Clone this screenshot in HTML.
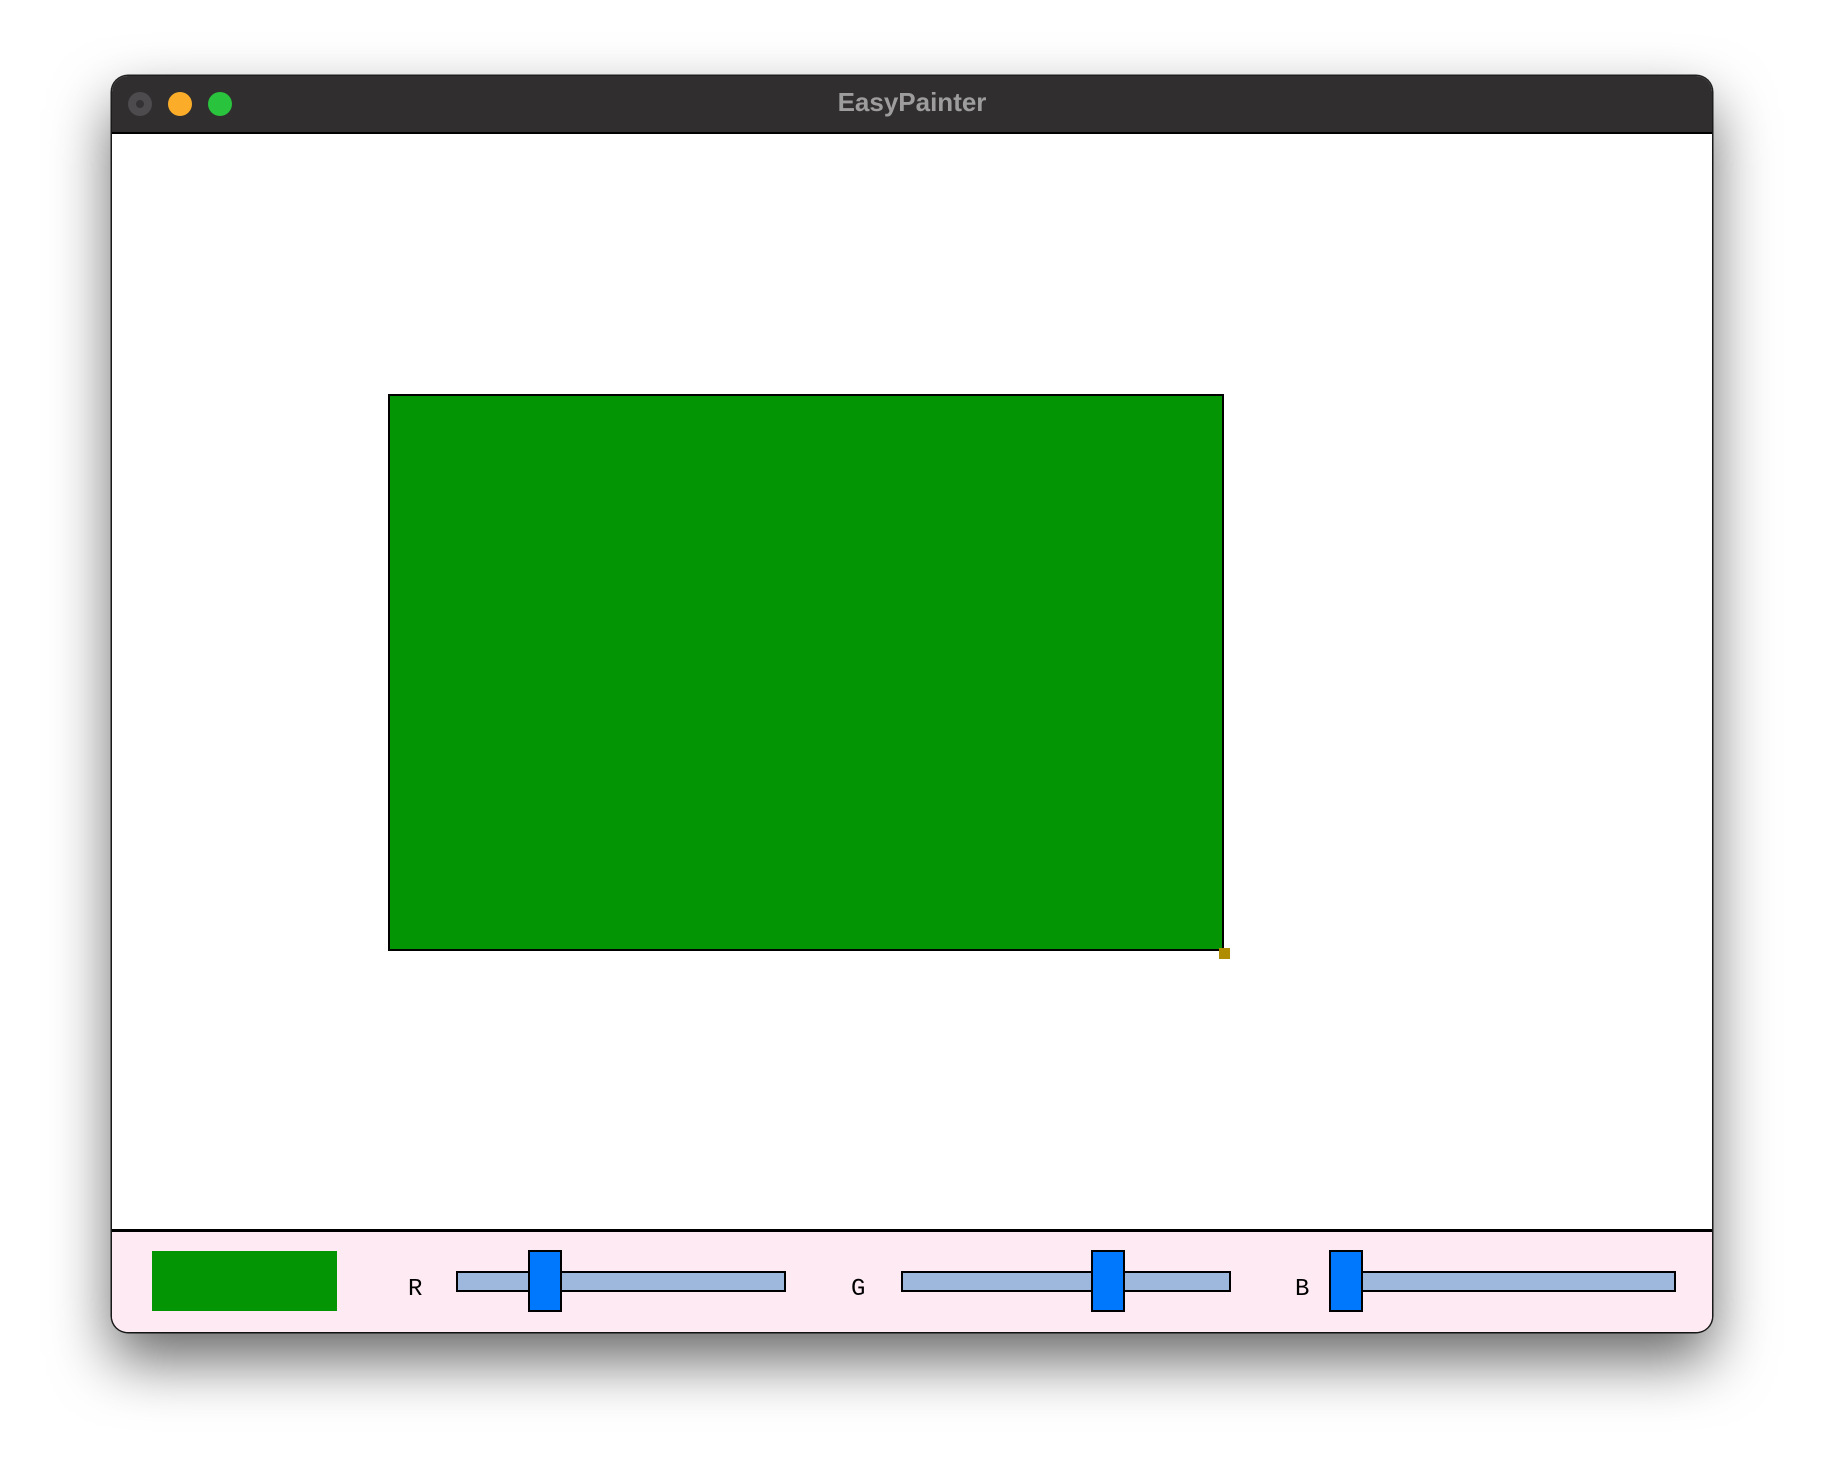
<!DOCTYPE html>
<html><head><style>
html,body{margin:0;padding:0;width:1824px;height:1480px;background:#fff;overflow:hidden;position:relative;font-family:"Liberation Sans",sans-serif}
.win{position:absolute;left:112px;top:76px;width:1600px;height:1256px;border-radius:16px;background:#fff;box-shadow:0 28px 60px rgba(0,0,0,0.6),0 0 0 1.5px #222;overflow:hidden}
.tb{position:absolute;left:0;top:0;width:100%;height:56px;background:#302e2f;border-bottom:2px solid #000}
.dot{position:absolute;top:16px;width:24px;height:24px;border-radius:50%}
.title{position:absolute;left:0;right:0;top:11px;text-align:center;color:#9e9d9e;font-weight:bold;font-size:26px}
.a{position:absolute;box-sizing:border-box}
.lbl{position:absolute;font-family:"Liberation Mono",monospace;font-size:24px;color:#000}
</style></head><body>
<div class="win">
 <div class="tb">
  <div class="dot" style="left:16px;background:#4d4b4d"><div style="position:absolute;left:8px;top:8px;width:8px;height:8px;border-radius:50%;background:#343234"></div></div>
  <div class="dot" style="left:56px;background:#fbad29"></div>
  <div class="dot" style="left:96px;background:#29c33d"></div>
  <div class="title">EasyPainter</div>
 </div>
 <div class="a" style="left:276px;top:318px;width:836px;height:557px;background:#039503;border:2px solid #000"></div>
 <div class="a" style="left:1107px;top:872px;width:11px;height:11px;background:#b08c00"></div>
 <div class="a" style="left:0;top:1153px;width:1600px;height:103px;background:#feeaf2;border-top:3px solid #000"></div>
 <div class="a" style="left:40px;top:1175px;width:185px;height:60px;background:#039503"></div>
 <div class="lbl" style="left:296px;top:1200px">R</div>
 <div class="a" style="left:344px;top:1195px;width:330px;height:21px;background:#9db8dc;border:2px solid #000"></div>
 <div class="a" style="left:416px;top:1174px;width:34px;height:62px;background:#0078fe;border:2px solid #000"></div>
 <div class="lbl" style="left:739px;top:1200px">G</div>
 <div class="a" style="left:789px;top:1195px;width:330px;height:21px;background:#9db8dc;border:2px solid #000"></div>
 <div class="a" style="left:979px;top:1174px;width:34px;height:62px;background:#0078fe;border:2px solid #000"></div>
 <div class="lbl" style="left:1183px;top:1200px">B</div>
 <div class="a" style="left:1217px;top:1195px;width:347px;height:21px;background:#9db8dc;border:2px solid #000"></div>
 <div class="a" style="left:1217px;top:1174px;width:34px;height:62px;background:#0078fe;border:2px solid #000"></div>
</div>
</body></html>
